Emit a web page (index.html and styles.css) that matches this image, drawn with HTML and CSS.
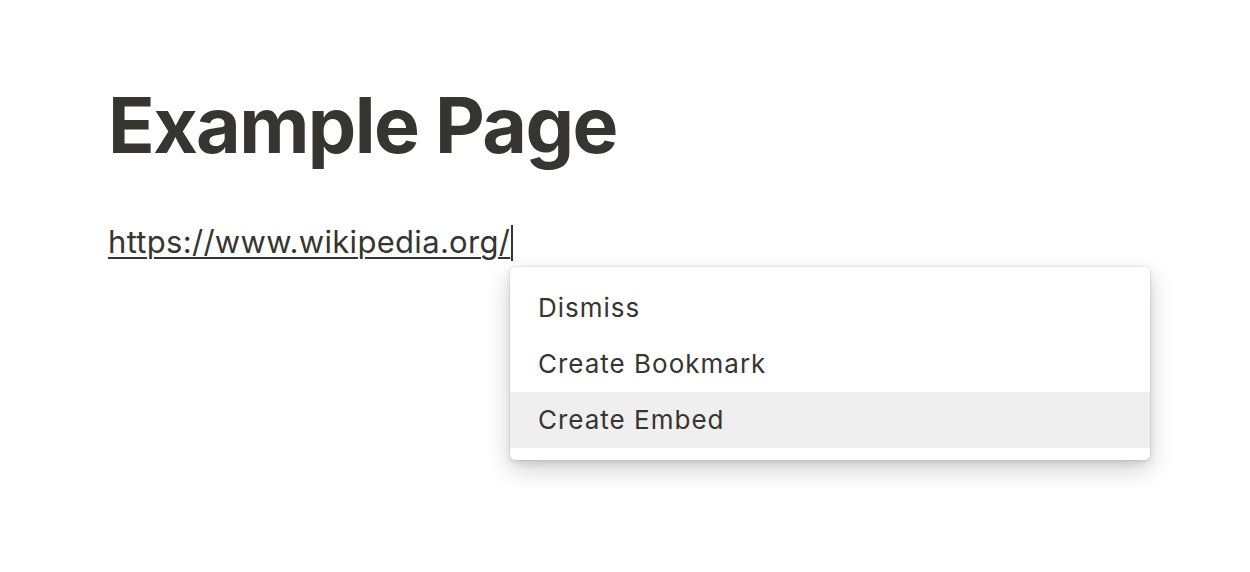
FILE: index.html
```html
<!DOCTYPE html>
<html>
<head>
<meta charset="utf-8">
<link rel="stylesheet" href="styles.css">
</head>
<body>
<div class="page">
  <h1 class="title">Example Page</h1>
  <div class="line"><span class="link">https://www.wikipedia.org/</span><span class="caret"></span></div>
  <div class="menu">
    <div class="item">Dismiss</div>
    <div class="item">Create Bookmark</div>
    <div class="item active">Create Embed</div>
  </div>
</div>
</body>
</html>
```
FILE: styles.css
```css
html, body {
  margin: 0;
  padding: 0;
  background: #ffffff;
  min-height: 100vh;
}
body {
  font-family: Inter, "Noto Sans", sans-serif;
  color: #37352f;
}
.page {
  padding: 78px 0 100px 108px;
}
.title {
  margin: 0;
  font-size: 77px;
  font-weight: 700;
  line-height: 94px;
  letter-spacing: -1.6px;
  color: #37352f;
}
.line {
  margin-top: 50px;
  font-size: 31px;
  line-height: 40px;
  letter-spacing: 0.3px;
  height: 40px;
}
.link {
  text-decoration: underline;
  text-decoration-thickness: 2px;
  text-underline-offset: 4px;
  color: #37352f;
}
.caret {
  display: inline-block;
  width: 2px;
  height: 36px;
  background: #37352f;
  vertical-align: -8px;
  margin-left: 1px;
}
.menu {
  margin: 5px 0 0 402px;
  width: 640px;
  padding: 13px 0 12px;
  background: #fff;
  border-radius: 5px;
  box-shadow: 0 0 0 1px rgba(15,15,15,0.05), 0 3px 6px rgba(15,15,15,0.1), 0 9px 24px rgba(15,15,15,0.2);
}
.item {
  height: 56px;
  line-height: 56px;
  padding-left: 28px;
  font-size: 26px;
  letter-spacing: 1px;
  color: #37352f;
}
.item.active {
  background: #efefef;
}
```
